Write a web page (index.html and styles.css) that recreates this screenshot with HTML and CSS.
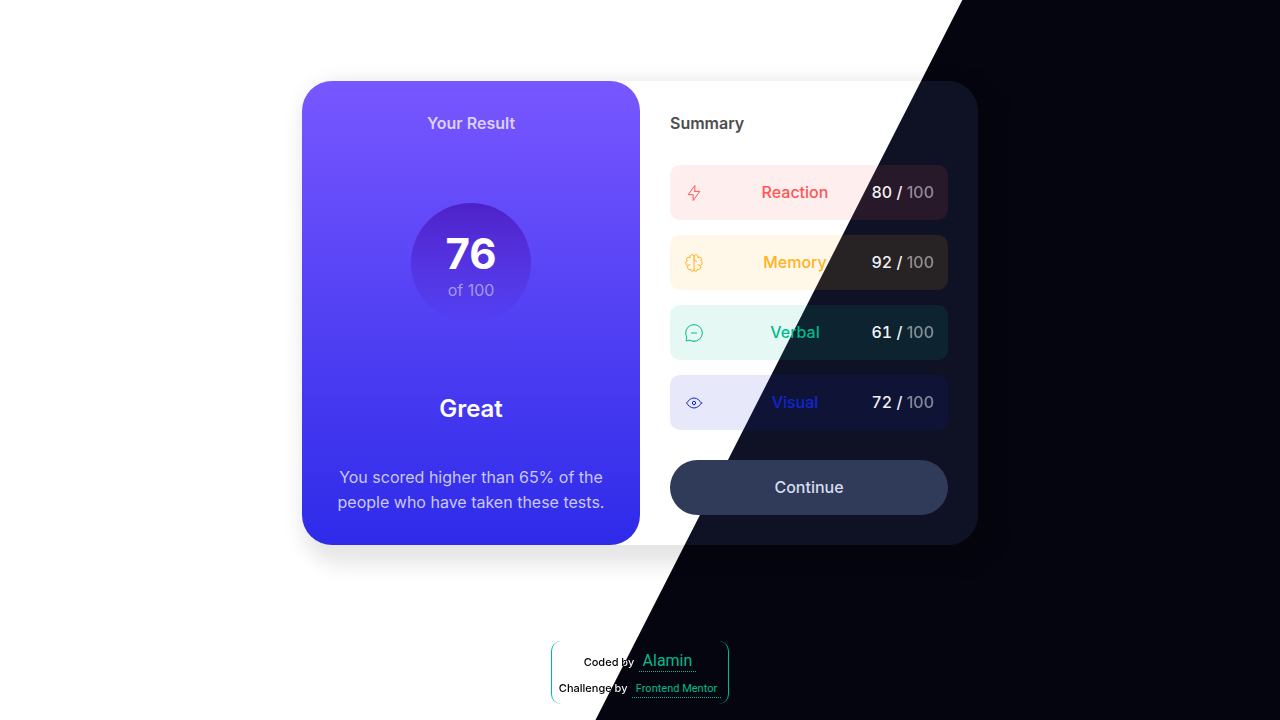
FILE: index.html
```html
<!DOCTYPE html>
<html lang="en">
<head>
<meta charset="utf-8">
<meta name="viewport" content="width=device-width, initial-scale=1">
<title>Results summary</title>
<link rel="stylesheet" href="styles.css">
</head>
<body class="page">
  <main class="main">
    <article class="card">
      <section class="result">
        <h1 class="result-title">Your Result</h1>
        <div class="score-circle">
          <strong class="score-value">76</strong>
          <span class="score-total">of 100</span>
        </div>
        <h2 class="grade">Great</h2>
        <p class="result-text">You scored higher than 65% of the people who have taken these tests.</p>
      </section>
      <section class="summary">
        <h2 class="summary-title">Summary</h2>
        <ul class="list">
          <li class="row reaction">
            <svg class="icon" viewBox="0 0 20 20" aria-hidden="true"><path d="M10.833 8.333V2.5l-6.666 9.167h5V17.5l6.666-9.167h-5Z"/></svg>
            <span class="label">Reaction</span>
            <span class="points">80 / <span class="max">100</span></span>
          </li>
          <li class="row memory">
            <svg class="icon" viewBox="0 0 20 20" aria-hidden="true"><path d="M5.833 11.667a2.5 2.5 0 1 0 .834 4.858"/><path d="M3.553 13.004a3.333 3.333 0 0 1-.728-5.53m.025-.067a2.083 2.083 0 0 1 2.983-2.824m.199.054A2.083 2.083 0 1 1 10 3.75v12.917a1.667 1.667 0 0 1-3.333 0M10 5.833a2.5 2.5 0 0 0 2.5 2.5m1.667 3.334a2.5 2.5 0 1 1-.834 4.858"/><path d="M16.447 13.004a3.334 3.334 0 0 0 .728-5.53m-.025-.067a2.083 2.083 0 0 0-2.983-2.824M10 3.75a2.085 2.085 0 0 1 2.538-2.033 2.084 2.084 0 0 1 1.43 2.92m-.635 12.03a1.667 1.667 0 0 1-3.333 0"/></svg>
            <span class="label">Memory</span>
            <span class="points">92 / <span class="max">100</span></span>
          </li>
          <li class="row verbal">
            <svg class="icon" viewBox="0 0 20 20" aria-hidden="true"><path d="M7.5 10h5"/><path d="M10 18.333A8.333 8.333 0 1 0 1.667 10c0 1.518.406 2.942 1.115 4.167l-.699 3.75 3.75-.699A8.295 8.295 0 0 0 10 18.333Z"/></svg>
            <span class="label">Verbal</span>
            <span class="points">61 / <span class="max">100</span></span>
          </li>
          <li class="row visual">
            <svg class="icon" viewBox="0 0 20 20" aria-hidden="true"><path d="M10 11.667a1.667 1.667 0 1 0 0-3.334 1.667 1.667 0 0 0 0 3.334Z"/><path d="M17.5 10c-1.574 2.492-4.402 5-7.5 5s-5.926-2.508-7.5-5C4.416 7.632 6.66 5 10 5s5.584 2.632 7.5 5Z"/></svg>
            <span class="label">Visual</span>
            <span class="points">72 / <span class="max">100</span></span>
          </li>
        </ul>
        <button class="continue" type="button">Continue</button>
      </section>
    </article>
  </main>
  <footer class="credits">
    <p class="credit"><span class="credit-text">Coded by</span> <a class="credit-link author" href="#">Alamin</a></p>
    <p class="credit"><span class="credit-text">Challenge by</span> <a class="credit-link source" href="#">Frontend Mentor</a></p>
  </footer>
</body>
</html>
```
FILE: styles.css
```css
:root {
  --split: 58.4%;
  --split-end: calc(58.4% + 1px);
  --green: #00bb8f;
}

* {
  box-sizing: border-box;
  margin: 0;
  padding: 0;
}

.page {
  display: flex;
  flex-direction: column;
  align-items: center;
  gap: 15px;
  min-height: 100vh;
  padding-bottom: 16px;
  font-family: "Inter", "Liberation Sans", sans-serif;
  font-size: 16px;
  font-weight: 500;
  line-height: 25px;
  background: linear-gradient(117deg, #fff var(--split), #04050e var(--split-end)) fixed;
}

.main {
  flex: 1;
  display: flex;
  align-items: center;
  justify-content: center;
  width: 100%;
}

.card {
  display: grid;
  grid-template-columns: 1fr 1fr;
  width: 100%;
  max-width: 676px;
  border-radius: 30px;
  background: linear-gradient(117deg, #fff var(--split), #0f1224 var(--split-end)) fixed;
  box-shadow: 10px 10px 20px 10px rgba(0, 0, 0, 0.1);
}

.result {
  display: flex;
  flex-direction: column;
  align-items: center;
  padding: 30px;
  border-radius: 30px;
  background: linear-gradient(#7857ff, #2e2be9);
  text-align: center;
}

.result-title {
  font-size: 16px;
  font-weight: 600;
  line-height: 25px;
  color: #dbd0ff;
}

.score-circle {
  display: flex;
  flex-direction: column;
  align-items: center;
  justify-content: center;
  width: 120px;
  height: 120px;
  padding-top: 6px;
  margin: 67px 0;
  border-radius: 50%;
  background: linear-gradient(#4d21c9, rgba(37, 33, 201, 0));
}

.score-value {
  font-size: 42px;
  font-weight: 700;
  line-height: 48px;
  color: #fff;
}

.score-total {
  font-weight: 400;
  color: #a397f2;
}

.grade {
  font-size: 24px;
  font-weight: 600;
  line-height: 38px;
  color: #fff;
}

.result-text {
  width: 274px;
  margin-top: 37px;
  font-weight: 400;
  color: #cac8fa;
}

.summary {
  padding: 30px 30px 29px;
}

.summary-title {
  font-size: 16px;
  font-weight: 600;
  line-height: 24px;
  color: #4d4d4d;
}

.list {
  display: grid;
  gap: 15px;
  margin: 30px 0;
  list-style: none;
}

.row {
  display: grid;
  grid-template-columns: 36px 1fr 64px;
  align-items: center;
  height: 55px;
  padding: 0 14px;
  border-radius: 10px;
}

.reaction {
  color: #ff5555;
  background: rgba(255, 85, 85, 0.1);
}

.memory {
  color: #ffb21e;
  background: rgba(255, 178, 30, 0.1);
}

.verbal {
  color: #00bb8f;
  background: rgba(0, 187, 143, 0.1);
}

.visual {
  color: #1125d4;
  background: rgba(17, 37, 212, 0.1);
}

.icon {
  width: 20px;
  height: 20px;
  fill: none;
  stroke: currentColor;
  stroke-width: 1;
  stroke-linecap: round;
  stroke-linejoin: round;
}

.label {
  text-align: center;
}

.points {
  white-space: nowrap;
  font-variant-numeric: tabular-nums;
  text-align: right;
  color: #f2f2f5;
}

.max {
  font-variant-numeric: normal;
  opacity: 0.5;
}

.continue {
  width: 100%;
  height: 55px;
  border: 0;
  border-radius: 30px;
  font: inherit;
  color: #d6dcf0;
  background: #303b59;
}

.credits {
  padding: 7px 7px 4px;
  border: 1px solid var(--green);
  border-width: 0 1px;
  border-radius: 10px;
  text-align: center;
}

.credit {
  line-height: 24px;
}

.credit-text {
  font-size: 11px;
  color: transparent;
  background: linear-gradient(117deg, #000 var(--split), #fff var(--split-end)) fixed;
  -webkit-background-clip: text;
  background-clip: text;
}

.credit-link {
  display: inline-block;
  padding: 0 4px;
  border-bottom: 1px dotted var(--green);
  font-family: "Roboto", sans-serif;
  font-weight: 400;
  line-height: 20px;
  text-decoration: none;
  color: var(--green);
}

.author {
  font-size: 16px;
}

.source {
  font-size: 11px;
  line-height: 16px;
}
```
